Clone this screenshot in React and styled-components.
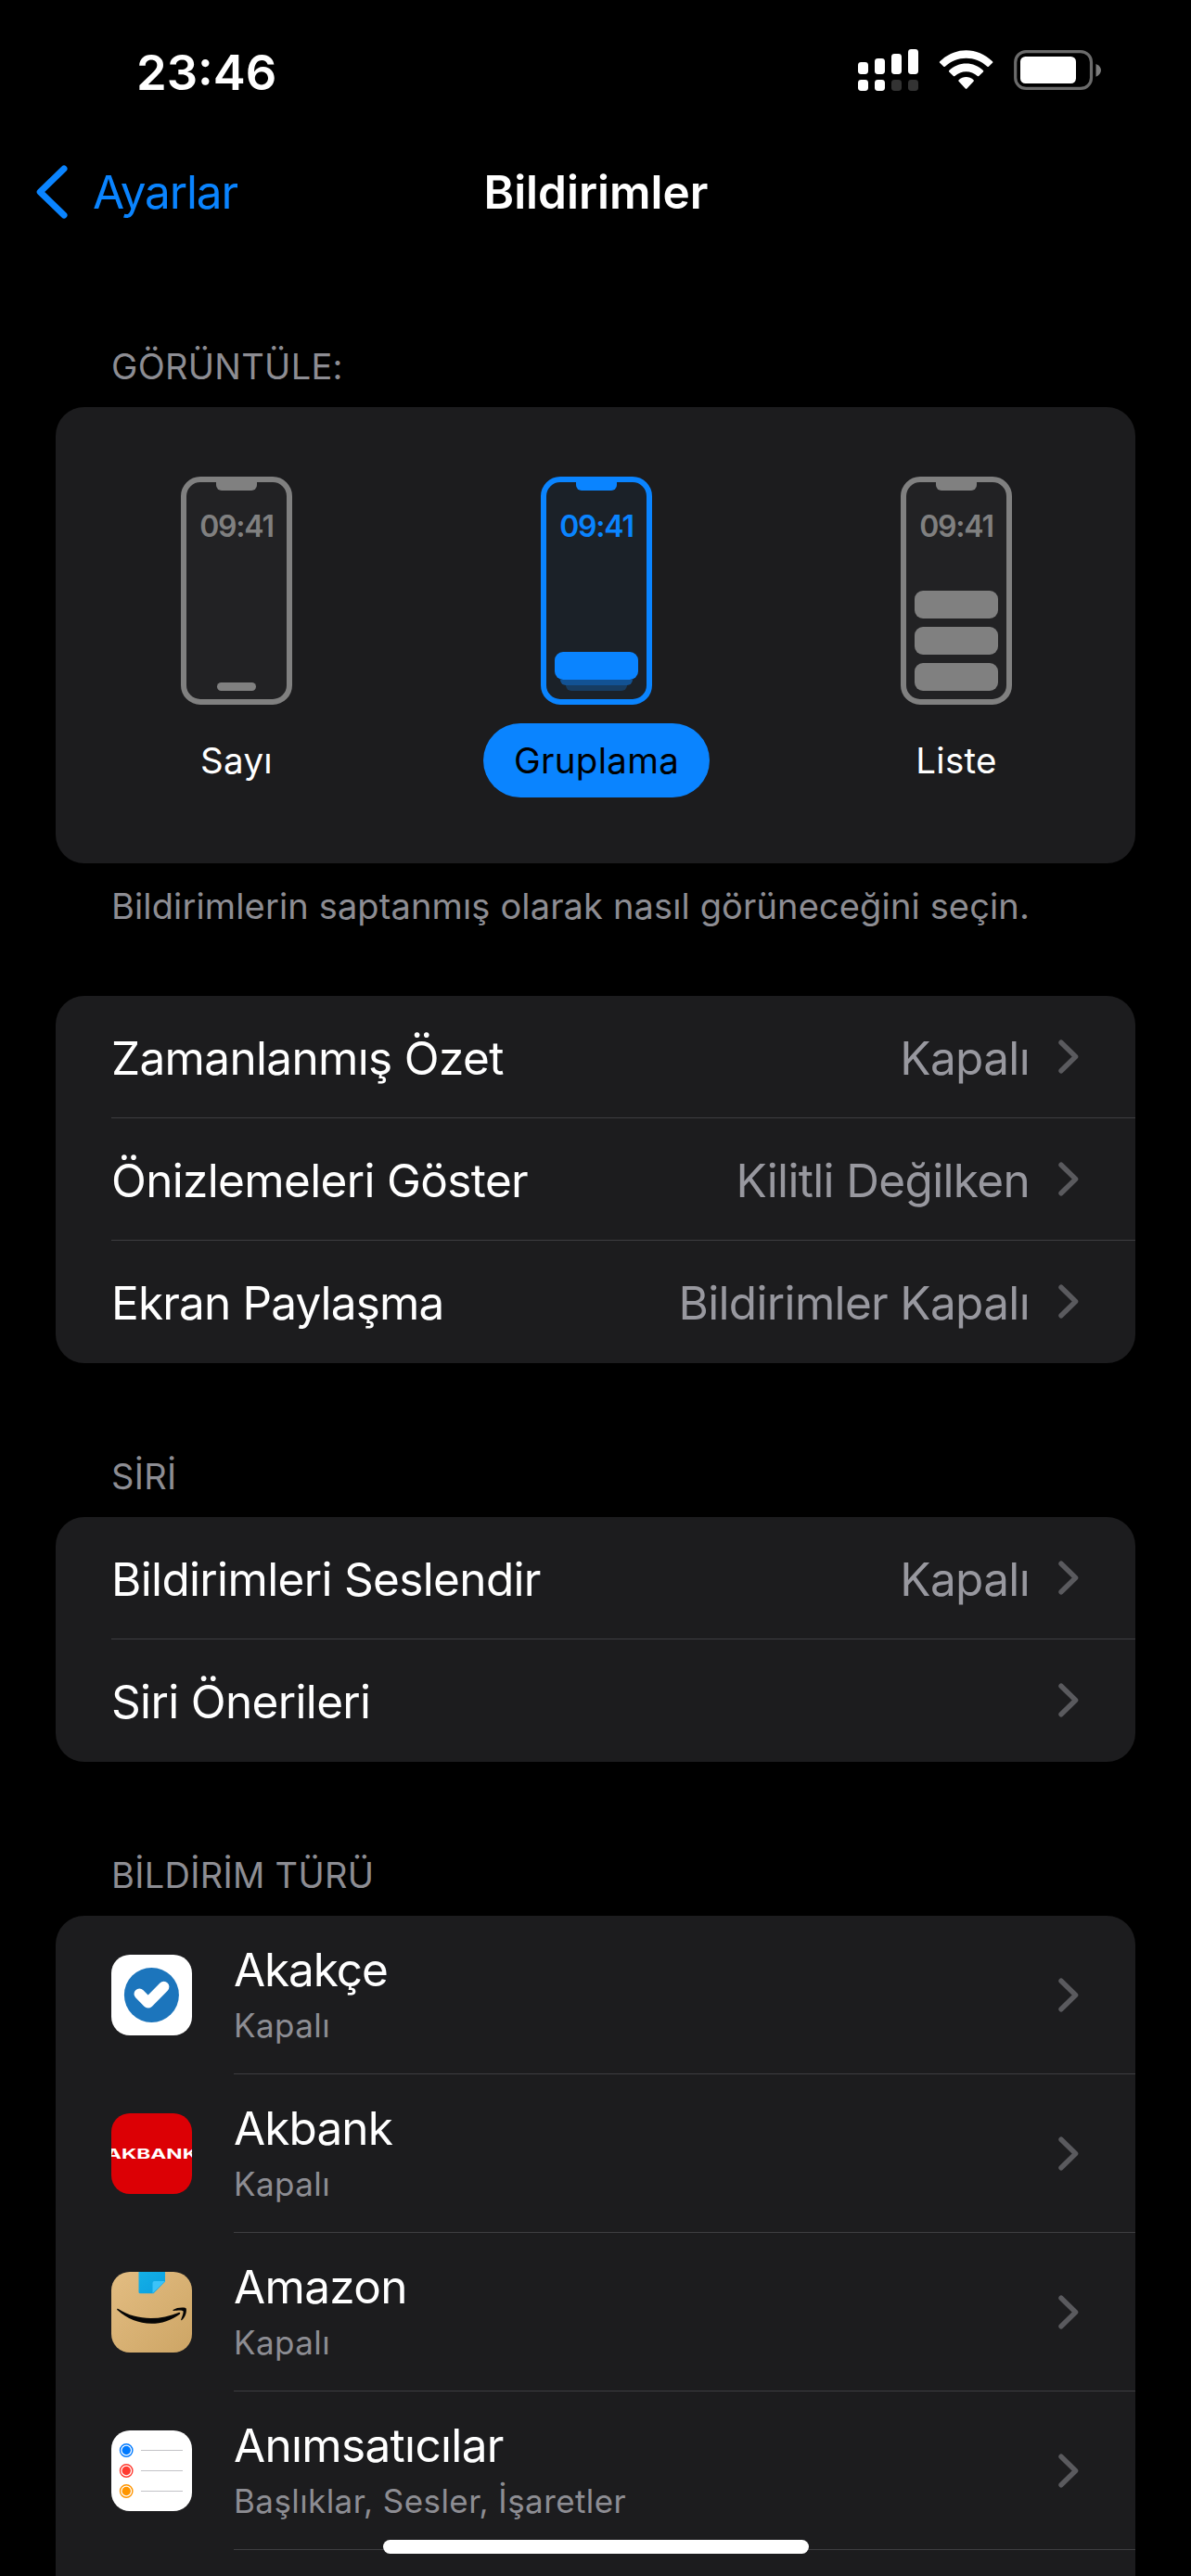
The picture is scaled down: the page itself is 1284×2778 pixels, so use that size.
import React from "react";
import styled, { createGlobalStyle } from "styled-components";

const modes = [
  { id: "count", label: "Sayı" },
  { id: "stack", label: "Gruplama", active: true },
  { id: "list", label: "Liste" },
];

const general = [
  { label: "Zamanlanmış Özet", value: "Kapalı" },
  { label: "Önizlemeleri Göster", value: "Kilitli Değilken" },
  { label: "Ekran Paylaşma", value: "Bildirimler Kapalı", track: "-0.85px" },
];

const siri = [
  { label: "Bildirimleri Seslendir", value: "Kapalı" },
  { label: "Siri Önerileri" },
];

const AkakceIcon = () => (
  <svg width="87" height="87" viewBox="0 0 87 87">
    <rect width="87" height="87" fill="#fff" />
    <circle cx="43.4" cy="43.4" r="29.5" fill="#1c75bc" />
    <path
      d="M30.3 42.3 L39.6 51.8 L56.6 34.6"
      fill="none"
      stroke="#fff"
      strokeWidth="11.6"
      strokeLinecap="round"
      strokeLinejoin="round"
    />
  </svg>
);

const AkbankIcon = () => (
  <svg width="87" height="87" viewBox="0 0 87 87">
    <rect width="87" height="87" fill="#dc0005" />
    <text
      x="-6"
      y="48.8"
      fill="#fff"
      fontFamily="Inter, sans-serif"
      fontWeight="700"
      fontSize="14.7"
      textLength="99"
      lengthAdjust="spacingAndGlyphs"
    >
      AKBANK
    </text>
  </svg>
);

const AmazonIcon = () => (
  <svg width="87" height="87" viewBox="0 0 87 87">
    <defs>
      <linearGradient id="box" x1="0" y1="0" x2="1" y2="1">
        <stop offset="0" stopColor="#e3bd82" />
        <stop offset="1" stopColor="#cda565" />
      </linearGradient>
      <linearGradient id="tape" x1="0" y1="0" x2="1" y2="1">
        <stop offset="0" stopColor="#14b0e6" />
        <stop offset="1" stopColor="#0b9fe0" />
      </linearGradient>
    </defs>
    <rect width="87" height="87" fill="url(#box)" />
    <path d="M29.5 0H58V10.5L45.5 23.3H31Q29.5 23.3 29.5 21.8Z" fill="url(#tape)" />
    <path d="M44.5 23.3V12Q44.5 10 46.5 10H58Z" fill="#3cc3f9" />
    <path
      d="M6.2 40.2C6.6 39.6 7.3 39.8 8 40.3C18 46.8 30 50 42.5 50C53 50 63 47.8 72.5 43.9C74 43.3 75 44.6 73.7 45.7C65 52.3 54 55.8 43.2 55.8C29.5 55.8 17 50.6 7 41.6C6.4 41.1 6 40.7 6.2 40.2Z"
      fill="#050505"
    />
    <path
      d="M66.6 41.1C70.3 38.3 77 38 80.2 38.9C81.6 39.4 81.3 47.2 76.4 51.8C75.6 52.5 74.9 52.1 75.2 51.2C76.3 48.5 78.3 43.3 77.4 42.2C76.4 41 70.6 41.6 67.3 42C66.3 42.1 66 41.6 66.6 41.1Z"
      fill="#050505"
    />
  </svg>
);

const ReminderDot = ({ y, color }) => (
  <>
    <circle cx="16.2" cy={y} r="6.7" fill="none" stroke={color} strokeWidth="1.4" />
    <circle cx="16.2" cy={y} r="4.7" fill={color} />
    <path d={`M32 ${y}H77`} stroke="#c3c3c7" strokeWidth="1" />
  </>
);

const RemindersIcon = () => (
  <svg width="87" height="87" viewBox="0 0 87 87">
    <rect width="87" height="87" fill="#fff" />
    <ReminderDot y={21.5} color="#007aff" />
    <ReminderDot y={43.5} color="#ff3b30" />
    <ReminderDot y={65.5} color="#ff9500" />
  </svg>
);

const apps = [
  { name: "Akakçe", detail: "Kapalı", Icon: AkakceIcon, track: "-1.1px" },
  { name: "Akbank", detail: "Kapalı", Icon: AkbankIcon, track: "-0.9px" },
  { name: "Amazon", detail: "Kapalı", Icon: AmazonIcon },
  { name: "Anımsatıcılar", detail: "Başlıklar, Sesler, İşaretler", Icon: RemindersIcon },
];

const StatusIcons = () => (
  <svg width="264" height="48" viewBox="925 52 264 48">
    <g fill="#fff">
      <rect x="925" y="67" width="11" height="13" rx="3.4" />
      <rect x="943" y="63" width="11" height="17" rx="3.4" />
      <rect x="961" y="58" width="11" height="22" rx="3.4" />
      <rect x="979" y="53" width="11" height="27" rx="3.4" />
      <rect x="925" y="86" width="11" height="12" rx="3.4" />
      <rect x="943" y="86" width="11" height="12" rx="3.4" />
    </g>
    <g fill="#333">
      <rect x="961" y="86" width="11" height="12" rx="3.4" />
      <rect x="979" y="86" width="11" height="12" rx="3.4" />
    </g>
    <g fill="#fff">
      <path d="M1013.2 66.2C1021.6 58.4 1031.2 54.2 1041.6 54.2C1052 54.2 1061.6 58.4 1070 66.2Q1070.8 67 1070 67.8L1065.9 71.8Q1065.2 72.4 1064.4 71.8C1057.8 65.8 1050 62.8 1041.6 62.8C1033.2 62.8 1025.4 65.8 1018.8 71.8Q1018 72.4 1017.3 71.8L1013.2 67.8Q1012.4 67 1013.2 66.2Z" />
      <path d="M1023.2 76C1028.4 71.2 1034.8 68.6 1041.6 68.6C1048.4 68.6 1054.8 71.2 1060 76Q1060.6 76.7 1060 77.5L1055.3 82Q1054.6 82.6 1053.8 82C1050.2 79 1046.2 77.3 1041.6 77.3C1037 77.3 1033 79 1029.4 82Q1028.6 82.6 1027.9 82L1023.2 77.5Q1022.6 76.7 1023.2 76Z" />
      <path d="M1033.6 86.3C1038.4 82 1044.8 82 1049.6 86.3Q1050.3 87 1049.6 87.8L1042.4 95.6Q1041.6 96.4 1040.8 95.6L1033.6 87.8Q1032.9 87 1033.6 86.3Z" />
    </g>
    <rect x="1094.7" y="55.6" width="81.8" height="39.8" rx="11.5" fill="none" stroke="#6b6b6b" strokeWidth="3.2" />
    <rect x="1100" y="61" width="60" height="29" rx="5.5" fill="#fff" />
    <path d="M1181.5 69C1185 70.4 1187 73 1187 75.7C1187 78.5 1185 81.3 1181.5 82.7Z" fill="#7c7c7c" />
  </svg>
);

const BackArrow = () => (
  <svg width="34" height="58" viewBox="0 0 34 58">
    <path
      d="M30 4 L4.2 29 L30 54"
      fill="none"
      stroke="#0a84ff"
      strokeWidth="7"
      strokeLinecap="round"
      strokeLinejoin="round"
    />
  </svg>
);

const Chevron = () => (
  <svg width="22" height="37" viewBox="0 0 22 37">
    <path
      d="M3 3.2 L18.6 18.5 L3 33.8"
      fill="none"
      stroke="#5a5a5e"
      strokeWidth="5.4"
      strokeLinecap="round"
      strokeLinejoin="round"
    />
  </svg>
);

const Preview = ({ type, active }) => (
  <Phone $active={active}>
    <Notch />
    <Clock>09:41</Clock>
    <Notices>
      {type === "count" && <Pill />}
      {type === "stack" && (
        <>
          <Notice />
          <Tail $width={78} $alpha={0.5} />
          <Tail $width={66} $alpha={0.27} />
        </>
      )}
      {type === "list" && (
        <NoticeList>
          <Notice />
          <Notice />
          <Notice />
        </NoticeList>
      )}
    </Notices>
  </Phone>
);

const App = () => {
  return (
    <Screen>
      <GlobalStyle />
      <StatusBar>
        <Time>23:46</Time>
        <StatusIcons />
      </StatusBar>
      <Navbar>
        <Back>
          <BackArrow />
          <span>Ayarlar</span>
        </Back>
        <Title>Bildirimler</Title>
      </Navbar>

      <SectionTitle $height={157}>GÖRÜNTÜLE:</SectionTitle>
      <ModeCard>
        {modes.map((mode) => (
          <Mode key={mode.id}>
            <Preview type={mode.id} active={mode.active} />
            <ModeLabel $active={mode.active}>{mode.label}</ModeLabel>
          </Mode>
        ))}
      </ModeCard>
      <SectionNote>Bildirimlerin saptanmış olarak nasıl görüneceğini seçin.</SectionNote>

      <Card>
        {general.map((item) => (
          <Row key={item.label}>
            <Label $track={item.track}>{item.label}</Label>
            <Value>{item.value}</Value>
            <Chevron />
          </Row>
        ))}
      </Card>

      <SectionTitle $height={166}>SİRİ</SectionTitle>
      <Card>
        {siri.map((item) => (
          <Row key={item.label}>
            <Label>{item.label}</Label>
            <Value>{item.value}</Value>
            <Chevron />
          </Row>
        ))}
      </Card>

      <SectionTitle $height={166}>BİLDİRİM TÜRÜ</SectionTitle>
      <AppCard>
        {apps.map(({ name, detail, Icon, track }) => (
          <AppRow key={name}>
            <AppIcon>
              <Icon />
            </AppIcon>
            <AppBody>
              <AppText>
                <AppName $track={track}>{name}</AppName>
                <AppDetail>{detail}</AppDetail>
              </AppText>
              <Chevron />
            </AppBody>
          </AppRow>
        ))}
      </AppCard>
      <HomeBar />
    </Screen>
  );
};

export default App;

const GlobalStyle = createGlobalStyle`
  * {
    box-sizing: border-box;
  }
  body {
    margin: 0;
    background: #000;
    font-family: Inter, "Liberation Sans", sans-serif;
  }
  svg {
    display: block;
    flex-shrink: 0;
  }
`;

const Screen = styled.div`
  position: relative;
  display: flex;
  flex-direction: column;
  width: 1284px;
  height: 2778px;
  overflow: hidden;
  background-color: #000;
  color: #fff;
  white-space: nowrap;
`;

const StatusBar = styled.div`
  display: flex;
  justify-content: space-between;
  align-items: center;
  flex-shrink: 0;
  height: 132px;
  padding: 20px 95px 0 147px;
`;

const Time = styled.div`
  padding-top: 3px;
  font-size: 52.5px;
  line-height: 62px;
  font-weight: 600;
`;

const Navbar = styled.div`
  display: grid;
  grid-template-columns: 1fr auto 1fr;
  align-items: center;
  flex-shrink: 0;
  height: 150px;
  padding: 0 38px 0 39px;
`;

const Back = styled.div`
  display: flex;
  align-items: center;
  gap: 27px;
  color: #0a84ff;
  font-size: 49.5px;
  line-height: 60px;
  letter-spacing: -1.15px;
`;

const Title = styled.div`
  font-size: 49.5px;
  line-height: 60px;
  font-weight: 600;
`;

const SectionTitle = styled.div`
  display: flex;
  align-items: flex-end;
  flex-shrink: 0;
  height: ${(props) => props.$height}px;
  padding: 0 120px 20px;
  color: #8d8d93;
  font-size: 38px;
  line-height: 48px;
  letter-spacing: 0.3px;
`;

const SectionNote = styled.div`
  flex-shrink: 0;
  height: 143px;
  padding: 22px 120px 0;
  color: #8d8d93;
  font-size: 38px;
  line-height: 48px;
  letter-spacing: 0.14px;
`;

const Card = styled.div`
  flex-shrink: 0;
  margin: 0 60px;
  border-radius: 31px;
  background-color: #1c1c1e;
  overflow: hidden;
`;

const ModeCard = styled(Card)`
  display: grid;
  grid-template-columns: repeat(3, 388px);
  height: 492px;
  padding: 75px 0 0 1px;
`;

const Mode = styled.div`
  display: flex;
  flex-direction: column;
  align-items: center;
  gap: 20px;
`;

const Phone = styled.div`
  display: flex;
  flex-direction: column;
  align-items: center;
  width: 120px;
  height: 246px;
  border: 6px solid;
  border-radius: 21px;
  color: ${(props) => (props.$active ? "#0a84ff" : "#808080")};
  background-color: ${(props) => (props.$active ? "#1b2128" : "#222224")};
`;

const Notch = styled.div`
  width: 44px;
  height: 9px;
  border-radius: 0 0 6px 6px;
  background-color: currentColor;
`;

const Clock = styled.div`
  margin-top: 19px;
  font-size: 32px;
  line-height: 40px;
  font-weight: 600;
  letter-spacing: -1.2px;
`;

const Notices = styled.div`
  display: flex;
  flex-direction: column;
  align-items: center;
  margin-top: auto;
  padding-bottom: 9px;
`;

const Pill = styled.div`
  width: 42px;
  height: 9px;
  border-radius: 5px;
  background-color: currentColor;
`;

const NoticeList = styled.div`
  display: grid;
  gap: 9px;
`;

const Notice = styled.div`
  width: 90px;
  height: 30px;
  border-radius: 9px;
  background-color: currentColor;
`;

const Tail = styled.div`
  width: ${(props) => props.$width}px;
  height: 6px;
  border-radius: 0 0 9px 9px;
  background-color: currentColor;
  opacity: ${(props) => props.$alpha};
`;

const ModeLabel = styled.div`
  height: 80px;
  padding: 0 33px;
  border-radius: 40px;
  font-size: 38.5px;
  line-height: 80px;
  letter-spacing: 0.3px;
  color: ${(props) => (props.$active ? "#000" : "#fff")};
  background-color: ${(props) => (props.$active ? "#0a84ff" : "transparent")};
`;

const Row = styled.div`
  display: flex;
  align-items: center;
  height: 132px;
  margin-left: 60px;
  padding-right: 61px;
  border-bottom: 1px solid #3d3d41;

  &:last-child {
    border-bottom-color: transparent;
  }
`;

const Label = styled.div`
  flex: 1;
  padding-top: 2px;
  font-size: 49.5px;
  line-height: 60px;
  letter-spacing: ${(props) => props.$track || "-0.66px"};
`;

const Value = styled.div`
  padding: 2px 31px 0 0;
  color: #98989f;
  font-size: 49.5px;
  line-height: 60px;
  letter-spacing: -0.66px;
`;

const AppCard = styled(Card)`
  flex: 1;
  border-radius: 31px 31px 0 0;
`;

const AppRow = styled.div`
  display: flex;
  align-items: center;
  height: 171px;
  padding-left: 60px;
`;

const AppIcon = styled.div`
  width: 87px;
  height: 87px;
  margin-right: 45px;
  border-radius: 20px;
  overflow: hidden;
`;

const AppBody = styled.div`
  display: flex;
  flex: 1;
  justify-content: space-between;
  align-items: center;
  height: 171px;
  padding-right: 61px;
  border-bottom: 1px solid #3d3d41;
`;

const AppText = styled.div`
  display: flex;
  flex-direction: column;
  gap: 3px;
  padding-top: 2px;
`;

const AppName = styled.div`
  font-size: 49.5px;
  line-height: 60px;
  letter-spacing: ${(props) => props.$track || "-0.68px"};
`;

const AppDetail = styled.div`
  color: #8d8d93;
  font-size: 35px;
  line-height: 54px;
  letter-spacing: 0.42px;
`;

const HomeBar = styled.div`
  position: absolute;
  left: 413px;
  bottom: 24px;
  width: 459px;
  height: 15px;
  border-radius: 8px;
  background-color: #fff;
`;
